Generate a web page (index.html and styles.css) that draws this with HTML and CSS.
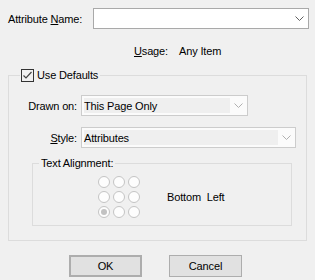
FILE: index.html
```html
<!DOCTYPE html>
<html>
<head>
    <title>Attribute Properties</title>
    <link rel="stylesheet" href="styles.css">
</head>
<body>
    <div class="dialog">
        <div class="name_row">
            <label class="name_label">Attribute <u>N</u>ame:</label>
            <div class="combo combo_edit">
                <span class="combo_text"></span>
                <span class="combo_arrow">
                    <svg width="9" height="5" viewBox="0 0 9 5"><polyline points="0.5,0.5 4.5,4.5 8.5,0.5" fill="none" stroke="#606060" stroke-width="1"/></svg>
                </span>
            </div>
        </div>

        <div class="usage_row">
            <span class="usage_label"><u>U</u>sage:</span><span>Any Item</span>
        </div>

        <fieldset class="group group_defaults">
            <legend class="group_title">
                <span class="check">
                    <svg width="13" height="13" viewBox="0 0 13 13">
                        <rect x="0.5" y="0.5" width="12" height="12" fill="none" stroke="#333"/>
                        <polyline points="2.5,6.5 5,9 10.5,3" fill="none" stroke="#444" stroke-width="1.2"/>
                    </svg>
                </span>Use Defaults
            </legend>

            <div class="field_row first">
                <label class="field_label">Drawn on:</label>
                <div class="combo combo_disabled combo_short">
                    <span class="combo_text">This Page Only</span>
                    <span class="combo_arrow">
                        <svg width="9" height="5" viewBox="0 0 9 5"><polyline points="0.5,0.5 4.5,4.5 8.5,0.5" fill="none" stroke="#b0b0b0" stroke-width="1"/></svg>
                    </span>
                </div>
            </div>

            <div class="field_row">
                <label class="field_label"><u>S</u>tyle:</label>
                <div class="combo combo_disabled combo_wide">
                    <span class="combo_text">Attributes</span>
                    <span class="combo_arrow">
                        <svg width="9" height="5" viewBox="0 0 9 5"><polyline points="0.5,0.5 4.5,4.5 8.5,0.5" fill="none" stroke="#b0b0b0" stroke-width="1"/></svg>
                    </span>
                </div>
            </div>

            <fieldset class="group group_align">
                <legend class="group_title align_title">Text Alignment:</legend>
                <div class="align_body">
                    <div class="radio_grid">
                        <span class="radio"></span>
                        <span class="radio"></span>
                        <span class="radio"></span>
                        <span class="radio"></span>
                        <span class="radio"></span>
                        <span class="radio"></span>
                        <span class="radio checked"></span>
                        <span class="radio"></span>
                        <span class="radio"></span>
                    </div>
                    <span class="align_value">Bottom&nbsp; Left</span>
                </div>
            </fieldset>
        </fieldset>

        <div class="buttons">
            <button class="btn btn_default">OK</button>
            <button class="btn">Cancel</button>
        </div>
    </div>
</body>
</html>
```

FILE: styles.css
```css
body {
    margin: 0;
    background-color: #f0f0f0;
    font-family: "Liberation Sans", Arial, sans-serif;
    font-size: 11px;
    letter-spacing: -0.15px;
    color: #000;
}

.dialog {
    width: 315px;
    height: 280px;
}

u {
    text-decoration-thickness: 1px;
    text-underline-offset: 1px;
}

/* attribute name */
.name_row {
    display: flex;
    align-items: center;
    padding: 8px 6px 0 8px;
}

.name_label {
    width: 85px;
}

.combo {
    display: flex;
    height: 21px;
    box-sizing: border-box;
}

.combo_text {
    flex: 1;
    display: flex;
    align-items: center;
    white-space: nowrap;
}

.combo_arrow {
    width: 17px;
    display: flex;
    align-items: center;
    justify-content: center;
}

.combo_edit {
    flex: 1;
    background-color: #fff;
    border: 1px solid #a9a9a9;
}

.combo_disabled {
    border: 1px solid #cccccc;
    background-color: #fbfbfb;
    padding: 2px 0 2px 2px;
}

.combo_disabled .combo_text {
    background-color: #efefef;
}

.combo_short {
    width: 167px;
}

.combo_wide {
    width: 215px;
}

/* usage */
.usage_row {
    margin-top: 16px;
    padding-left: 134px;
    line-height: 13px;
}

.usage_label {
    display: inline-block;
    width: 45px;
}

/* group boxes */
.group {
    border: 1px solid #dcdcdc;
    padding: 0;
    min-width: 0;
}

.group_defaults {
    margin: 11px 8px 0 8px;
    padding-bottom: 14px;
}

.group_title {
    line-height: 13px;
    padding: 0 2px 0 1px;
    margin-left: 11px;
}

.check {
    display: inline-block;
    width: 13px;
    height: 13px;
    vertical-align: top;
    margin-right: 3px;
}

.check svg {
    display: block;
}

.field_row {
    display: flex;
    align-items: center;
    margin-top: 11px;
}

.field_row.first {
    margin-top: 13px;
}

.field_label {
    width: 68px;
    text-align: right;
    margin-right: 4px;
}

.group_align {
    margin: 9px 14px 0 23px;
}

.align_title {
    margin-left: 6px;
    padding: 0 2px;
}

.align_body {
    display: flex;
    align-items: center;
    padding: 6px 0 7px 65px;
}

.radio_grid {
    display: grid;
    grid-template-columns: repeat(3, 12px);
    grid-auto-rows: 12px;
    gap: 3px;
}

.radio {
    box-sizing: border-box;
    width: 12px;
    height: 12px;
    border: 1px solid #c4c4c4;
    border-radius: 50%;
    background-color: #fdfdfd;
    display: flex;
    align-items: center;
    justify-content: center;
}

.radio.checked::after {
    content: "";
    width: 6px;
    height: 6px;
    border-radius: 50%;
    background-color: #c2c2c2;
}

.align_value {
    margin-left: 27px;
}

/* buttons */
.buttons {
    display: flex;
    gap: 27px;
    margin-top: 14px;
    padding-left: 69px;
}

.btn {
    box-sizing: border-box;
    width: 73px;
    height: 22px;
    background-color: #e1e1e1;
    border: 1px solid #adadad;
    font-family: inherit;
    font-size: 11px;
    letter-spacing: inherit;
    color: #000;
    padding: 0;
}

.btn_default {
    border: 2px solid #adadad;
}
```
